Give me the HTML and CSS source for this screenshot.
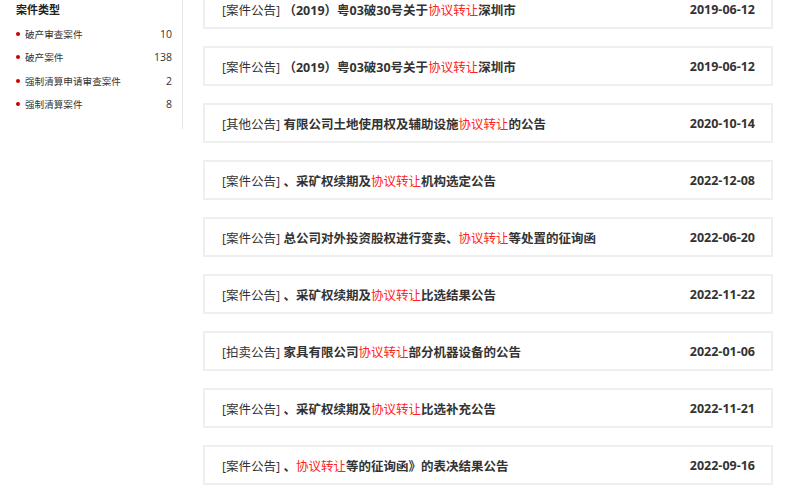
FILE: index.html
```html
<!DOCTYPE html>
<html lang="zh-CN">
<head>
    <meta charset="UTF-8">
    <meta name="viewport" content="width=device-width, initial-scale=1.0">
    <title>案件公告</title>
    <link rel="stylesheet" href="styles.css">
</head>
<body>

    <div class="page">
        <!-- 左侧分类 -->
        <div class="sidebar">
            <h3>案件类型</h3>
            <ul class="types">
                <li><span class="dot"></span><span class="type-name">破产审查案件</span><span class="count">10</span></li>
                <li><span class="dot"></span><span class="type-name">破产案件</span><span class="count">138</span></li>
                <li><span class="dot"></span><span class="type-name">强制清算申请审查案件</span><span class="count">2</span></li>
                <li><span class="dot"></span><span class="type-name">强制清算案件</span><span class="count">8</span></li>
            </ul>
        </div>

        <!-- 公告列表 -->
        <div class="main">
            <ul class="notices">
                <li class="notice">
                    <p class="title"><span class="tag">[案件公告]</span> （2019）粤03破30号关于<em>协议转让</em>深圳市</p>
                    <span class="date">2019-06-12</span>
                </li>
                <li class="notice">
                    <p class="title"><span class="tag">[案件公告]</span> （2019）粤03破30号关于<em>协议转让</em>深圳市</p>
                    <span class="date">2019-06-12</span>
                </li>
                <li class="notice">
                    <p class="title"><span class="tag">[其他公告]</span> 有限公司土地使用权及辅助设施<em>协议转让</em>的公告</p>
                    <span class="date">2020-10-14</span>
                </li>
                <li class="notice">
                    <p class="title"><span class="tag">[案件公告]</span> 、采矿权续期及<em>协议转让</em>机构选定公告</p>
                    <span class="date">2022-12-08</span>
                </li>
                <li class="notice">
                    <p class="title"><span class="tag">[案件公告]</span> 总公司对外投资股权进行变卖、<em>协议转让</em>等处置的征询函</p>
                    <span class="date">2022-06-20</span>
                </li>
                <li class="notice">
                    <p class="title"><span class="tag">[案件公告]</span> 、采矿权续期及<em>协议转让</em>比选结果公告</p>
                    <span class="date">2022-11-22</span>
                </li>
                <li class="notice">
                    <p class="title"><span class="tag">[拍卖公告]</span> 家具有限公司<em>协议转让</em>部分机器设备的公告</p>
                    <span class="date">2022-01-06</span>
                </li>
                <li class="notice">
                    <p class="title"><span class="tag">[案件公告]</span> 、采矿权续期及<em>协议转让</em>比选补充公告</p>
                    <span class="date">2022-11-21</span>
                </li>
                <li class="notice">
                    <p class="title"><span class="tag">[案件公告]</span> 、<em>协议转让</em>等的征询函》的表决结果公告</p>
                    <span class="date">2022-09-16</span>
                </li>
            </ul>
        </div>
    </div>

</body>
</html>
```

FILE: styles.css
```css
body {
    margin: 0;
    font-family: "Open Sans", "Noto Sans CJK SC", sans-serif;
    color: #333;
    background: #fff;
    overflow: hidden;
}
.page {
    display: flex;
    align-items: flex-start;
}
/* Sidebar */
.sidebar {
    width: 156px;
    padding: 1px 10px 13px 16px;
    border-right: 1px solid #e6e6e6;
    flex-shrink: 0;
}
.sidebar h3 {
    margin: 0 0 3px;
    font-size: 11px;
    line-height: 18px;
    font-weight: bold;
    color: #222;
}
.types {
    list-style: none;
    margin: 0;
    padding: 0;
}
.types li {
    display: flex;
    align-items: center;
    height: 23.5px;
    font-size: 9.6px;
    color: #333;
}
.dot {
    width: 4px;
    height: 4px;
    border-radius: 50%;
    background: #c00;
    margin: 0 5px 0 0;
}
.type-name {
    flex: 1;
}
.count {
    font-size: 10.5px;
    text-align: right;
}
/* Notices */
.main {
    margin-left: 20px;
    width: 570px;
}
.notices {
    list-style: none;
    margin: -11px 0 0;
    padding: 0;
}
.notice {
    display: flex;
    align-items: center;
    justify-content: space-between;
    box-sizing: border-box;
    height: 40px;
    margin-bottom: 17px;
    padding: 0 16px 0 17px;
    border: 2px solid #efefef;
    background: #fff;
}
.title {
    margin: 0;
    font-size: 12.5px;
    font-weight: bold;
    color: #333;
    white-space: nowrap;
}
.tag {
    font-weight: normal;
}
.title em {
    font-style: normal;
    font-weight: normal;
    color: #f22;
}
.date {
    font-size: 12.5px;
    font-weight: bold;
    color: #333;
}
```
